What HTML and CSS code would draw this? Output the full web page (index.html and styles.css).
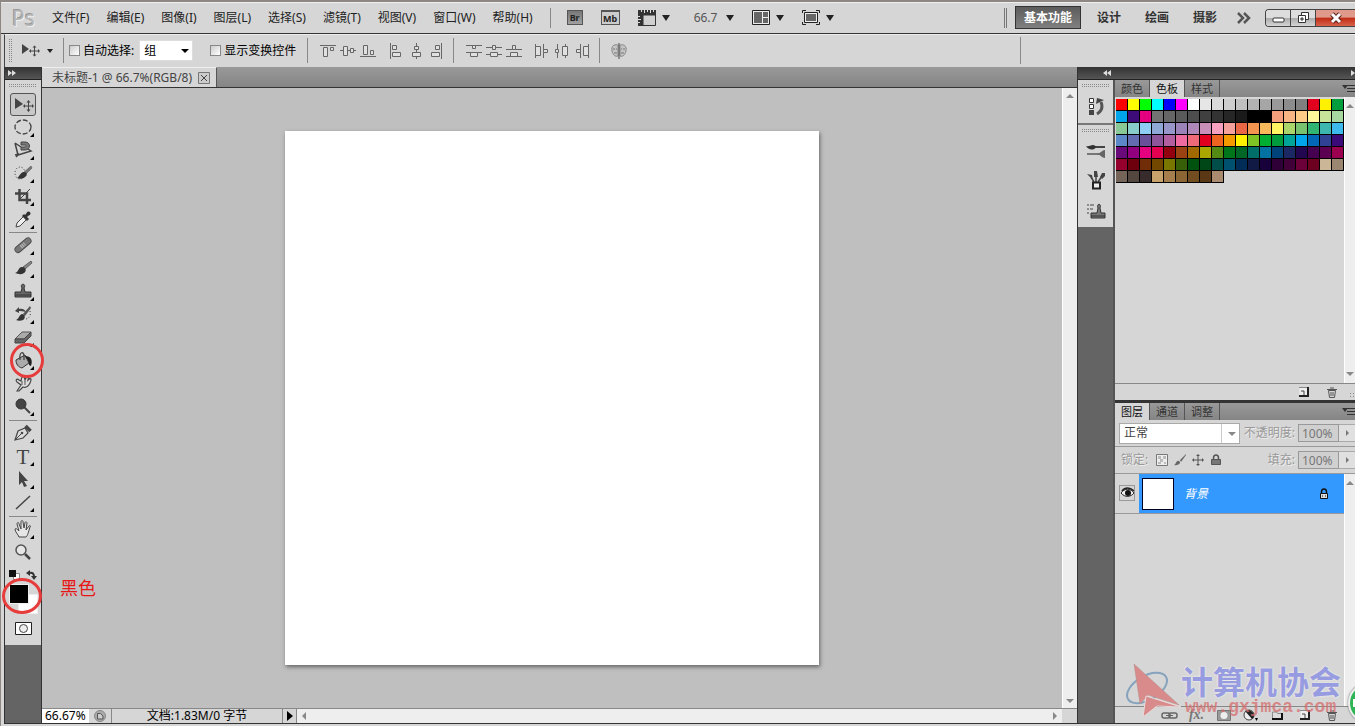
FILE: index.html
```html
<!DOCTYPE html>
<html lang="zh-CN">
<head>
<meta charset="UTF-8">
<meta name="viewport" content="width=device-width, initial-scale=1.0">
<title>未标题-1 @ 66.7%(RGB/8)</title>
<link rel="stylesheet" href="styles.css">
</head>
<body>
<div class="app">
  <!-- Menu bar -->
  <header class="menubar">
    <div class="logo">Ps</div>
    <nav class="menus">
      <button>文件(F)</button>
      <button>编辑(E)</button>
      <button>图像(I)</button>
      <button>图层(L)</button>
      <button>选择(S)</button>
      <button>滤镜(T)</button>
      <button>视图(V)</button>
      <button>窗口(W)</button>
      <button>帮助(H)</button>
    </nav>
    <span class="sep menu-sep"></span>
    <div class="quick">
      <button class="br" aria-label="Bridge">Br</button>
      <button class="mb" aria-label="Mini Bridge">Mb</button>
      <button class="drop" aria-label="查看额外内容">
        <svg width="18" height="16"><path d="M0 0h18v5H5v11H0z" fill="#333"/><path d="M5 5h12.500v10.500H5z" fill="#d0d0d0" stroke="#333"/><path d="M3.500 0v2M6.500 0v3M9.500 0v2M12.500 0v3M15.500 0v2M0 6.500h2M0 9.500h3M0 12.500h2" stroke="#ddd"/></svg>
        <i class="tri"></i>
      </button>
      <button class="drop zoom">66.7 <i class="tri"></i></button>
      <button class="drop" aria-label="排列文档">
        <svg width="18" height="15"><path d="M.5.5h17v14H.5z" fill="#eee" stroke="#222"/><path d="M2 2h8v11H2zM11 2h5v5h-5zM11 8h5v5h-5z" fill="#666"/></svg>
        <i class="tri"></i>
      </button>
      <button class="drop" aria-label="屏幕模式">
        <svg width="18" height="15"><path d="M.5 3V.5H4M14 .5h3.500V3M17.500 12v2.500H14M4 14.500H.5V12" fill="none" stroke="#222"/><path d="M2.500 2.500h13v10h-13z" fill="#eee" stroke="#222"/><path d="M4 4h10v7H4z" fill="#666"/></svg>
        <i class="tri"></i>
      </button>
    </div>
    <div class="spaces">
      <span class="double"></span>
      <button class="current">基本功能</button>
      <button>设计</button>
      <button>绘画</button>
      <button>摄影</button>
      <button aria-label="更多"><svg width="14" height="12"><path d="M1 1l5 5-5 5M7 1l5 5-5 5" fill="none" stroke="#555" stroke-width="2.500"/></svg></button>
    </div>
    <div class="winbtns">
      <button aria-label="最小化"><svg width="13" height="13"><rect x="1" y="7" width="11" height="4" rx="1" fill="#fff" stroke="#333"/></svg></button>
      <button aria-label="还原"><svg width="13" height="13"><path d="M4.500 1.500h7v7h-7z" fill="#fff" stroke="#333"/><path d="M1.500 4.500h7v7h-7z" fill="#fff" stroke="#333"/><path d="M4 7h2v2H4z" fill="#ccc" stroke="#333"/></svg></button>
      <button class="close" aria-label="关闭"><svg width="14" height="12"><path d="M3 2l8 8M11 2l-8 8" stroke="#5a2020" stroke-width="5"/><path d="M3 2l8 8M11 2l-8 8" stroke="#fff" stroke-width="3"/></svg></button>
    </div>
  </header>

  <!-- Options for the move tool -->
  <div class="options">
    <span class="vgrip"></span>
    <button class="drop move" aria-label="移动工具">
      <svg width="18" height="16"><path d="M0 1v10l7-5z" fill="#444"/><path d="M12.500 3.500v9M8 8h9" stroke="#444"/><path d="M12.500 2.500l2 2h-4zM12.500 13.500l2-2h-4zM7 8l2-2v4zM18 8l-2-2v4z" fill="#444"/></svg>
      <i class="tri small"></i>
    </button>
    <span class="sep"></span>
    <label class="check auto"><input type="checkbox"> 自动选择:</label>
    <span class="group-select"><select aria-label="自动选择对象"><option>组</option><option>图层</option></select></span>
    <label class="check"><input type="checkbox"> 显示变换控件</label>
    <span class="sep sep-wide"></span>
    <div class="aligns">
      <button aria-label="顶对齐"><svg width="16" height="16"><path d="M0 2.500h16"/><path d="M3.500 4.500h4v9h-4zM10.500 4.500h3v3h-3z"/></svg></button>
      <button aria-label="垂直居中对齐"><svg width="16" height="16"><path d="M0 7.500h16"/><path d="M3.500 3.500h4v9h-4zM10.500 5.500h3v4h-3z"/></svg></button>
      <button aria-label="底对齐"><svg width="16" height="16"><path d="M0 13.500h16"/><path d="M3.500 2.500h4v9h-4zM10.500 7.500h3v4h-3z"/></svg></button>
    </div>
    <div class="aligns">
      <button aria-label="左对齐"><svg width="16" height="16"><path d="M2.500 0v16"/><path d="M4.500 2.500h4v4h-4zM4.500 9.500h8v4h-8z"/></svg></button>
      <button aria-label="水平居中对齐"><svg width="16" height="16"><path d="M8.500 0v16"/><path d="M6.500 3.500h4v3h-4zM4.500 9.500h8v4h-8z"/></svg></button>
      <button aria-label="右对齐"><svg width="16" height="16"><path d="M13.500 0v16"/><path d="M7.500 2.500h4v4h-4zM3.500 9.500h8v4h-8z"/></svg></button>
    </div>
    <span class="sep"></span>
    <div class="aligns">
      <button aria-label="按顶分布"><svg width="16" height="16"><path d="M0 2.500h16M0 9.500h16"/><path d="M6.500 2.500h3v3h-3zM4.500 9.500h7v4h-7z"/></svg></button>
      <button aria-label="垂直居中分布"><svg width="16" height="16"><path d="M0 4.500h16M0 11.500h16"/><path d="M6.500 2.500h3v4h-3zM4.500 9.500h7v4h-7z"/></svg></button>
      <button aria-label="按底分布"><svg width="16" height="16"><path d="M0 6.500h16M0 13.500h16"/><path d="M6.500 2.500h3v4h-3zM4.500 9.500h7v4h-7z"/></svg></button>
    </div>
    <div class="aligns">
      <button aria-label="按左分布"><svg width="16" height="16"><path d="M1.500 1v14M9.500 1v14"/><path d="M1.500 3.500h5v9h-5zM9.500 6.500h4v3h-4z"/></svg></button>
      <button aria-label="水平居中分布"><svg width="16" height="16"><path d="M3.500 1v14M11.500 1v14"/><path d="M1.500 6.500h3v3h-3zM8.500 3.500h5v9h-5z"/></svg></button>
      <button aria-label="按右分布"><svg width="16" height="16"><path d="M6.500 1v14M14.500 1v14"/><path d="M2.500 6.500h4v3h-4zM9.500 3.500h5v9h-5z"/></svg></button>
    </div>
    <span class="sep"></span>
    <button aria-label="自动对齐图层"><svg width="16" height="16"><path d="M7 2C3 1 0 3 1 8c1 4 3 6 6 5zM9 2c4-1 7 1 6 6-1 4-3 6-6 5z" fill="#c4c4c4" stroke="#888"/><path d="M8 0v16" stroke="#444"/><path d="M2 6h2M5 6h1M10 6h1M12 6h2M3 10h3M10 10h3" stroke="#777"/></svg></button>
    <span class="sep last-sep"></span>
  </div>

  <main class="workspace">
    <!-- Toolbox -->
    <aside class="toolbox">
      <div class="dock-head"><svg width="8" height="6"><path d="M0 0l4 3-4 3zM4 0l4 3-4 3z" fill="#ddd"/></svg></div>
      <div class="tools">
        <span class="hgrip"></span>
        <div class="tool-group">
          <button class="tool active" aria-label="移动"><svg viewBox="0 0 26 23"><path d="M5 5v11l8-5z" fill="#444"/><path d="M18.500 9v8M14 13h9" stroke="#444"/><path d="M18.500 7l2 2.500h-4zM18.500 19l2-2.500h-4zM13 13l2-2v4zM24 13l-2-2v4z" fill="#444"/></svg></button>
          <button class="tool more" aria-label="椭圆选框"><svg viewBox="0 0 26 23"><ellipse cx="13" cy="11" rx="8" ry="7" fill="none" stroke="#444" stroke-dasharray="5 2" stroke-width="1.300"/></svg></button>
          <button class="tool more" aria-label="套索"><svg viewBox="0 0 26 23"><path d="M5 4l6 4M5 4l3 12 13-4-3-2M5 16l4-1M8 16l-2 2" fill="none" stroke="#444" stroke-width="1.500"/><path d="M11 3h4c6 0 6 8 0 8h-4V8h3c3 0 3-2 0-2h-3z" fill="#777" stroke="#444"/></svg></button>
          <button class="tool more" aria-label="快速选择"><svg viewBox="0 0 26 23"><ellipse cx="10" cy="11" rx="5" ry="6" fill="none" stroke="#333" stroke-dasharray="1 2"/><path d="M21 4l1 2-7 7-2-2z" fill="#777" stroke="#444" stroke-width=".5"/><path d="M7 16c2 0 3-6 7-6 3 0 4 3 1 5-2 2-5 2-8 1z" fill="#333"/></svg></button>
          <button class="tool more" aria-label="裁剪"><svg viewBox="0 0 26 23"><path d="M9.500 4v11H21M5 8.500h12V19" fill="none" stroke="#444" stroke-width="2.500"/><path d="M20 4L9 15" stroke="#444"/></svg></button>
          <button class="tool more" aria-label="吸管"><svg viewBox="0 0 26 23"><path d="M14 8l3 3-7 7-4 1 1-4z" fill="#eee" stroke="#444"/><path d="M13 7l5 5M15 9l4-4" stroke="#333" stroke-width="3"/><circle cx="18.500" cy="5.500" r="2" fill="#333"/></svg></button>
        </div>
        <div class="tool-group">
          <button class="tool more" aria-label="修复画笔"><svg viewBox="0 0 26 23"><path d="M8 15.500L18 7" stroke="#444" stroke-width="7" stroke-linecap="round"/><path d="M8 15.500L18 7" stroke="#777" stroke-width="5.500" stroke-linecap="round"/><path d="M11 13l4-3.500" stroke="#bbb" stroke-width="4" stroke-dasharray="1 1"/></svg></button>
          <button class="tool more" aria-label="画笔"><svg viewBox="0 0 26 23"><path d="M21 4l1 2-7 6-2-2z" fill="#888" stroke="#444" stroke-width=".7"/><path d="M5 16c4-1 3-6 7-6 4 0 5 4 2 6-3 2-6 1-9 0z" fill="#333"/></svg></button>
          <button class="tool more" aria-label="仿制图章"><svg viewBox="0 0 26 23"><path d="M11 12l1-4c-3-5 5-5 2 0l1 4h6v5H5v-5z" fill="#666" stroke="#333"/><path d="M5 15h16" stroke="#333"/></svg></button>
          <button class="tool more" aria-label="历史记录画笔"><svg viewBox="0 0 26 23"><path d="M5 8l4-4v2c4-1 6 1 7 3-3-1-5-1-7-1v2z" fill="#444"/><path d="M20 3l1 2-6 8-2-2z" fill="#555"/><path d="M6 17c3-1 3-5 6-6 3 0 4 4 1 6-2 1-5 1-7 0z" fill="#333"/><path d="M20 8c1 4 0 7-4 8" fill="none" stroke="#444" stroke-dasharray="1 2"/></svg></button>
          <button class="tool more" aria-label="橡皮擦"><svg viewBox="0 0 26 23"><path d="M5 13l7-7h9l-6 7z" fill="#aaa" stroke="#555"/><path d="M5 13h9l7-7v4l-7 7H5z" fill="#666" stroke="#444"/></svg></button>
          <button class="tool more marked" aria-label="油漆桶"><svg viewBox="0 0 26 23"><path d="M6 11l9-5 4 8-7 5c-4-1-6-4-6-8z" fill="#aaa" stroke="#333"/><path d="M10 11c-1-9 4-9 4-4v4" fill="none" stroke="#444" stroke-width="1.300"/><path d="M15 7c6 0 8 4 6 10l-2-1c0-3-1-5-3-7z" fill="#222"/></svg></button>
          <button class="tool more" aria-label="涂抹"><svg viewBox="0 0 26 23"><path d="M7 19l4-6-4-3c-2-2 0-4 2-2l2 1c1-6 3-6 4-1 2-5 4-4 3 0 3-3 4-1 2 3-2 4-4 5-7 4l-4 4z" fill="#ddd" stroke="#444" stroke-width="1.200"/><path d="M12 9v4M15 9v4" stroke="#555"/></svg></button>
          <button class="tool more" aria-label="减淡"><svg viewBox="0 0 26 23"><path d="M14 12l6 6" stroke="#444" stroke-width="2"/><circle cx="11" cy="9" r="5" fill="#444" stroke="#333"/></svg></button>
        </div>
        <div class="tool-group">
          <button class="tool more" aria-label="钢笔"><svg viewBox="0 0 26 23"><path d="M5 18l3-9 7-3 3 5-5 5z" fill="#ddd" stroke="#444" stroke-width="1.200"/><path d="M6 17l5-5" stroke="#444"/><circle cx="12" cy="11" r="1.300" fill="#444"/><path d="M15.500 4l5 5" stroke="#444" stroke-width="3.500"/></svg></button>
          <button class="tool more type" aria-label="文字">T</button>
          <button class="tool more" aria-label="路径选择"><svg viewBox="0 0 26 23"><path d="M9 3v14l3-3 2 5 3-1-3-5h4z" fill="#444"/></svg></button>
          <button class="tool more" aria-label="直线"><svg viewBox="0 0 26 23"><path d="M6 18L20 5" stroke="#444" stroke-width="1.500"/></svg></button>
        </div>
        <div class="tool-group">
          <button class="tool more" aria-label="抓手"><svg viewBox="0 0 26 23"><path d="M9 19c-1-3-4-5-4-8 1-1 2 0 4 2L7 6c0-2 2-2 2 0l2 5V4c0-2 2-2 2 0l1 6 1-5c0-2 2-1 2 0l-1 7 3-4c1-1 2 0 1 1-2 6-2 8-4 10z" fill="#e6e6e6" stroke="#444"/></svg></button>
          <button class="tool" aria-label="缩放"><svg viewBox="0 0 26 23"><circle cx="11" cy="9" r="5" fill="#e6e6e6" stroke="#555" stroke-width="1.500"/><path d="M15 13l5 5" stroke="#444" stroke-width="2.500"/></svg></button>
        </div>
        <div class="color-minis">
          <button aria-label="默认颜色"><svg width="11" height="10"><path d="M4.500 3.500h6v6h-6z" fill="#fff" stroke="#888"/><path d="M0 0h7v7H0z" fill="#111"/></svg></button>
          <button aria-label="切换颜色"><svg width="11" height="10"><path d="M3 3c4-1 5 1 5 4" fill="none" stroke="#333" stroke-width="2"/><path d="M0 3l4-3v6zM5 6h6l-3 4z" fill="#333"/></svg></button>
        </div>
        <div class="color-pair marked">
          <button class="fore" aria-label="前景色"></button>
          <button class="back" aria-label="背景色"></button>
        </div>
        <button class="mask" aria-label="快速蒙版"><svg width="17" height="13"><path d="M.5.5h16v12H.5z" fill="#fff" stroke="#222"/><circle cx="8.500" cy="6.500" r="4" fill="#eee" stroke="#444"/></svg></button>
      </div>
    </aside>

    <!-- Open document -->
    <section class="document">
      <div class="doc-tabs">
        <div class="doc-tab">未标题-1 @ 66.7%(RGB/8) <button class="x" aria-label="关闭文档"><svg width="12" height="12"><path d="M.5.5h11v11H.5z" fill="#ccc" stroke="#777"/><path d="M3 3l6 6M9 3L3 9" stroke="#444"/></svg></button></div>
      </div>
      <div class="doc-body">
        <div class="canvas">
          <div class="paper"></div>
          <span class="note">黑色</span>
        </div>
        <div class="vscroll"><i class="up"></i><i class="down"></i></div>
      </div>
      <div class="status">
        <input type="text" value="66.67%" aria-label="缩放比例">
        <span class="status-icon"><svg width="12" height="12"><circle cx="6" cy="6" r="5.500" fill="#aaa" stroke="#888"/><path d="M3.500 9V3.500h3L9 6v3z" fill="#ccc" stroke="#555"/></svg></span>
        <span class="doc-size">文档:1.83M/0 字节</span>
        <button class="status-more" aria-label="状态栏菜单"><svg width="6" height="10"><path d="M0 0l6 5-6 5z"/></svg></button>
        <div class="hscroll"><i class="left"></i><i class="right"></i></div>
      </div>
    </section>

    <!-- Panels on the right -->
    <aside class="dock">
      <div class="dock-head dock-split">
        <svg width="8" height="6"><path d="M4 0L0 3l4 3zM8 0L4 3l4 3z" fill="#ddd"/></svg>
        <svg width="4" height="6"><path d="M0 0l4 3-4 3z" fill="#ddd"/></svg>
      </div>
      <div class="dock-body">
        <div class="icon-strip">
          <div class="strip-group">
            <span class="hgrip"></span>
            <button aria-label="历史记录"><svg width="18" height="20"><path d="M2.500 2.500h4v4h-4zM2.500 8.500h4v4h-4z" fill="#fff" stroke="#333"/><path d="M2 14h5v5H2z" fill="#444"/><path d="M10 18c5-3 6-7 4-12" fill="none" stroke="#555" stroke-width="3"/><path d="M9 8l1-6 7 2z" fill="#444"/></svg></button>
          </div>
          <div class="strip-group">
            <span class="hgrip"></span>
            <button aria-label="画笔预设"><svg width="20" height="16"><path d="M9 4h10" stroke="#444" stroke-width="2"/><path d="M0 3c3 1 4-1 7-1 2 0 3 2 3 2-2 4-8 3-10-1z" fill="#333"/><path d="M1 11h12" stroke="#777" stroke-width="2"/><path d="M11 11c4-1 5-4 8-4v8c-3 0-4-3-8-4z" fill="#666"/></svg></button>
            <button aria-label="画笔"><svg width="20" height="20"><path d="M8 11L5 6M10 11V5M12 11l4-6" stroke="#444" stroke-width="1.500"/><path d="M1 3l5 1 1 5zM8 0h3l1 6H8zM14 6l2-4h3v3l-3 3z" fill="#444"/><path d="M7 11.500h7v6H7z" fill="#eee" stroke="#222" stroke-width="2"/></svg></button>
            <button aria-label="仿制源"><svg width="20" height="18"><path d="M1 3h2M1 7h2M1 11h2M4 3h4M4 7h3" stroke="#444"/><path d="M11 11l1-5c-2-5 4-5 2 0l1 5h4v5H5v-5z" fill="#777" stroke="#333"/><path d="M5 14h14" stroke="#333"/></svg></button>
          </div>
        </div>
        <div class="panels">
          <section class="panel swatch-panel">
            <div class="tabs">
              <button>颜色</button><button class="current">色板</button><button>样式</button>
              <span class="panel-menu"></span>
            </div>
            <div class="scroll-area">
              <div class="scroll-content"><div class="swatches" id="swatches"></div></div>
              <div class="panel-scroll"><i class="up"></i><i class="down"></i></div>
            </div>
            <div class="panel-foot">
              <button aria-label="新建色板"><svg width="10" height="10"><path d="M.5.5h9v9h-9z" fill="#eee"/><path d="M0 .5h9" stroke="#888"/><path d="M9 0v9H0" fill="none" stroke="#222" stroke-width="2"/><path d="M2 4h3v4" fill="none" stroke="#444"/></svg></button>
              <button aria-label="删除色板"><svg width="10" height="11"><path d="M1.500 3.500h7l-1 7h-5zM0 2.500h10M3 1h4M4 5v4M6 5v4" fill="none" stroke="#555"/></svg></button>
              <span class="resize"></span>
            </div>
          </section>
          <section class="panel layer-panel">
            <div class="tabs">
              <button class="current">图层</button><button>通道</button><button>调整</button>
              <span class="panel-menu"></span>
            </div>
            <div class="layer-row">
              <span class="blend"><select aria-label="混合模式"><option>正常</option><option>溶解</option></select></span>
              <label class="amount">不透明度:<input type="text" value="100%"></label><button class="step" aria-label="不透明度滑块"></button>
            </div>
            <div class="layer-row">
              <span class="lock-label">锁定:</span>
              <button class="lock" aria-label="锁定透明像素"><svg width="12" height="12"><path d="M.5.5h11v11H.5z" fill="#eee" stroke="#777"/><path d="M2 2h3v3H2zM7 2h3v3H7zM4 5h3v3H4zM2 8h3v2H2zM8 8h2v2H8z" fill="#bbb"/></svg></button>
              <button class="lock" aria-label="锁定图像像素"><svg width="12" height="12"><path d="M12 0L6 6l1 2 5-7zM0 11c2 0 2-5 5-4 3 2-1 5-5 4z" fill="#666"/></svg></button>
              <button class="lock" aria-label="锁定位置"><svg width="12" height="12"><path d="M6 1v10M1 6h10" stroke="#555"/><path d="M6 0l2 2H4zM6 12l2-2H4zM0 6l2-2v4zM12 6l-2-2v4z" fill="#555"/></svg></button>
              <button class="lock" aria-label="锁定全部"><svg width="12" height="12"><path d="M3.500 6V4c0-4 5-4 5 0v2" fill="none" stroke="#555" stroke-width="1.500"/><path d="M1.500 5.500h9v5h-9z" fill="#777" stroke="#555"/></svg></button>
              <label class="amount">填充:<input type="text" value="100%"></label><button class="step" aria-label="填充滑块"></button>
            </div>
            <div class="scroll-area">
              <div class="scroll-content">
                <div class="layer">
                  <button class="eye" aria-label="图层可见性"><svg width="13" height="12"><path d="M0 6c3-5 10-5 13 0-3 4-9 5-13 0z" fill="#eee" stroke="#222"/><circle cx="7" cy="6" r="3" fill="#111"/><path d="M1 4c3-4 8-4 12 0" fill="none" stroke="#222" stroke-width="1.500"/></svg></button>
                  <div class="layer-main">
                    <span class="thumb"></span>
                    <span class="layer-name">背景</span>
                    <svg width="10" height="11"><path d="M2.500 5V4c0-4 5-4 5 0v1" fill="none" stroke="#111" stroke-width="1.500"/><path d="M1.500 5.500h7v5h-7z" fill="#ddd" stroke="#111"/><path d="M3 8h1M6 8h1" stroke="#111"/></svg>
                  </div>
                </div>
              </div>
              <div class="panel-scroll"><i class="up"></i></div>
            </div>
            <div class="panel-foot layer-foot">
              <button aria-label="链接图层"><svg width="17" height="9"><rect x="1" y="2" width="8" height="5" rx="2" fill="none" stroke="#666" stroke-width="1.500"/><rect x="8" y="2" width="8" height="5" rx="2" fill="none" stroke="#666" stroke-width="1.500"/><path d="M5 4.500h7" stroke="#666"/></svg></button>
              <button class="fx" aria-label="图层样式">fx.</button>
              <button aria-label="图层蒙版"><svg width="14" height="11"><path d="M.5.5h13v10H.5z" fill="#999" stroke="#777"/><circle cx="7" cy="5.500" r="3.500" fill="#eee"/></svg></button>
              <button aria-label="调整图层"><svg width="15" height="12"><circle cx="6" cy="6" r="5" fill="#eee" stroke="#444"/><path d="M2 2c7-3 12 5 7 8z" fill="#222"/><path d="M12 9h3l-1.500 3z"/></svg></button>
              <button aria-label="新建组"><svg width="11" height="9"><path d="M.5 2.500V1h4l1 1.500h5v6H.5z" fill="#ddd" stroke="#888"/><path d="M0 8h10V2" fill="none" stroke="#111" stroke-width="2"/></svg></button>
              <button aria-label="新建图层"><svg width="10" height="10"><path d="M.5.5h9v9h-9z" fill="#eee"/><path d="M0 .5h9" stroke="#888"/><path d="M9 0v9H0" fill="none" stroke="#222" stroke-width="2"/><path d="M2 4h3v4" fill="none" stroke="#444"/></svg></button>
              <button aria-label="删除图层"><svg width="10" height="11"><path d="M1.500 3.500h7l-1 7h-5zM0 2.500h10M3 1h4M4 5v4M6 5v4" fill="none" stroke="#555"/></svg></button>
            </div>
          </section>
        </div>
      </div>
    </aside>
  </main>

  <!-- Site watermark -->
  <div class="watermark">
    <svg width="56" height="56"><ellipse cx="22" cy="25" rx="22" ry="12" transform="rotate(-30 22 25)" fill="none" stroke="#86a3bd" stroke-width="2"/><path d="M9 1l45 41-31-10-8 9z" fill="#d98a8a" stroke="#b09090" stroke-width=".5"/><path d="M21 33l35 11-24-1-14 11z" fill="#d98a8a" stroke="#e8dada"/></svg>
    <div class="mark-text">
      <span class="club">计算机协会</span>
      <span class="site">www.gxjmca.com</span>
    </div>
  </div>
  <div class="ball"></div>
</div>
<script src="script.js"></script>
</body>
</html>
```
FILE: styles.css
```css
*, *::before, *::after { box-sizing: border-box; }
body { margin: 0; font-family: "Noto Sans", "Noto Sans CJK SC", sans-serif; font-size: 12px; line-height: 16px; color: #222; background: #d6d6d6; }
button { border: 0; padding: 0; margin: 0; background: none; font: inherit; color: inherit; }
input, select { font: inherit; color: inherit; margin: 0; }
svg { display: block; }

.app { position: relative; display: flex; flex-direction: column; height: 100vh; padding: 0 0 2px 3px; overflow: hidden; border-top: 2px solid #8d8883; border-left: 1px solid #8d8883; background: #d6d6d6; }

/* menu bar */
.menubar { flex: none; display: flex; align-items: center; height: 32px; margin-left: -3px; padding: 0 0 1px 11px; border-top: 1px solid #eee; border-bottom: 1px solid #333; white-space: nowrap; }
.logo { width: 40px; font-family: "Open Sans", sans-serif; font-size: 21px; color: #b4b4b4; text-shadow: 1px 1px 0 #f0f0f0, -1px -1px 0 #999; }
.menus { display: flex; gap: 17px; }
.sep { flex: none; width: 1px; height: 25px; background: #888; }
.menu-sep { height: 20px; margin: 0 16px 0 17px; }
.quick { display: flex; align-items: center; gap: 18px; }
.br, .mb { width: 16px; height: 15px; border: 1px solid #555; background: linear-gradient(#777, #a0a0a0); font-size: 9px; font-weight: bold; line-height: 13px; }
.mb { width: 19px; background: #ccc; border-top-width: 2px; }
.drop { display: flex; align-items: center; gap: 6px; }
.zoom { gap: 9px; margin: 0 0 0 6px; color: #555; }
.tri { border: 4px solid transparent; border-top: 6px solid #222; border-bottom: 0; }
.tri.small { border-width: 4px 3px 0; }
.spaces { display: flex; align-items: center; gap: 24px; margin-left: auto; padding-right: 14px; font-weight: bold; color: #333; }
.double { width: 3px; height: 20px; margin-right: -16px; border: solid #777; border-width: 0 1px; }
.spaces .current { width: 66px; height: 23px; margin-right: -8px; border: 1px solid #333; background: linear-gradient(#5c5c5c, #808080); color: #fff; }
.spaces button:last-child { margin-left: -4px; }
.winbtns { display: flex; height: 18px; border: 1px solid #444; border-right: 0; border-radius: 4px 0 0 4px; overflow: hidden; }
.winbtns button { display: flex; align-items: center; justify-content: center; width: 25px; border-right: 1px solid #444; background: linear-gradient(#ddd 50%, #aaa 50%, #d5d5d5); }
.winbtns .close { width: 39px; border: 0; background: linear-gradient(#e09a8c 45%, #c02c14 50%, #d8604a); }

/* options bar */
.options { flex: none; display: flex; align-items: center; height: 33px; padding: 0 16px 1px 4px; border-left: 1px solid #444; border-top: 1px solid #eee; color: #000; white-space: nowrap; }
.vgrip { width: 4px; height: 23px; margin-right: 9px; }
.hgrip { display: block; width: 28px; height: 4px; margin: 0 auto; }
.vgrip, .hgrip { background: repeating-linear-gradient(90deg, transparent 0 1px, #d6d6d6 1px 2px), repeating-linear-gradient(#888 0 1px, transparent 1px 2px); }
.move { margin-right: 10px; gap: 7px; }
.check { display: flex; align-items: center; gap: 3px; padding-left: 5px; }
.check input { appearance: none; width: 11px; height: 11px; border: 1px solid #888; background: linear-gradient(135deg, #ccc, #fff); }
.auto { margin-right: 5px; }
.group-select, .blend { position: relative; display: block; }
.group-select { margin-right: 12px; }
.group-select select { display: block; width: 54px; height: 21px; padding: 0 4px; appearance: none; border: 1px solid #ddd; background: #fff; }
.group-select::after { content: ""; position: absolute; right: 4px; top: 9px; border: 4px solid transparent; border-top-color: #000; border-bottom: 0; }
.sep-wide { margin-left: 11px; }
.aligns { display: flex; gap: 4px; padding: 0 0 0 12px; }
.aligns + .sep { margin-left: 9px; }
.aligns path { fill: #e0e0e0; stroke: #666; }
.sep + button { margin-left: 11px; }
.last-sep { margin-left: auto; margin-right: 318px; height: 27px; }

/* workspace */
.workspace { flex: 1; display: flex; min-height: 0; border-bottom: 1px solid #333; border-left: 1px solid #333; }
.dock-head { flex: none; display: flex; align-items: center; height: 13px; padding: 0 3px; background: linear-gradient(#333, #555); border-bottom: 1px solid #222; }

.toolbox { flex: none; width: 37px; border-right: 1px solid #333; background: #646464; }
.tools { padding: 4px 4px 10px; background: #d6d6d6; }
.tool-group { display: flex; flex-direction: column; align-items: center; padding: 1px 0 2px; border-bottom: 1px solid #888; }
.hgrip + .tool-group { padding-top: 5px; padding-bottom: 1px; }
.tool-group:nth-of-type(4) { border: 0; }
.tool { position: relative; width: 26px; height: 23px; }
.tool svg { width: 26px; height: 23px; fill: none; }
.tool.active { border: 1px solid #555; border-radius: 3px; background: #c8c8c8; }
.tool.active svg { margin: -1px; }
.tool.more::before { content: ""; position: absolute; right: 2px; bottom: 2px; border: solid transparent; border-width: 0 0 4px 4px; border-bottom-color: #000; }
.tool.type { font-family: "Liberation Serif", serif; font-size: 21px; line-height: 20px; color: #444; }
.marked::after { content: ""; position: absolute; z-index: 2; border: 3px solid #e63c3c; border-radius: 50%; }
.tool.marked::after { width: 34px; height: 35px; left: 0; top: -6px; }
.color-minis { display: flex; justify-content: space-between; padding: 4px 0 4px; }
.color-pair { position: relative; display: grid; width: 29px; height: 30px; }
.color-pair.marked::after { width: 40px; height: 36px; left: -7px; top: -6px; }
.color-pair button { grid-area: 1 / 1; width: 20px; height: 20px; border: 1px solid #eee; }
.color-pair .fore { z-index: 1; background: #000; }
.color-pair .back { align-self: end; justify-self: end; background: #fff; }
.mask { display: block; margin: 8px auto 0; }

/* document window */
.document { flex: 1; display: flex; flex-direction: column; min-width: 0; }
.doc-tabs { flex: none; display: flex; height: 21px; background: linear-gradient(#999, #858585); border-bottom: 1px solid #333; }
.doc-tab { display: flex; align-items: center; gap: 6px; padding: 0 6px 0 10px; background: #d6d6d6; border-right: 1px solid #555; border-top: 1px solid #eee; color: #444; }
.doc-body { flex: 1; display: flex; min-height: 0; }
.canvas { position: relative; flex: 1; display: flex; align-items: center; justify-content: center; background: #bfbfbf; overflow: hidden; }
.paper { width: 534px; height: 534px; background: #fff; box-shadow: 1px 2px 4px #666; }
.note { position: absolute; left: 18px; top: 488px; font-size: 18px; line-height: 24px; color: #e81818; }
.vscroll { display: flex; flex-direction: column; justify-content: space-between; align-items: center; width: 15px; padding: 6px 0 5px; background: #eee; border-left: 1px solid #fff; }
.up, .down, .left, .right { border: 4px solid transparent; }
.up { border-top: 0; border-bottom-color: #888; }
.down { border-bottom: 0; border-top-color: #888; }
.left { border-left: 0; border-right-color: #888; }
.right { border-right: 0; border-left-color: #888; }
.status { flex: none; display: flex; height: 15px; border-top: 1px solid #888; color: #000; line-height: 14px; }
.status input { width: 47px; padding: 0 3px; border: 0; background: #fff; }
.status-icon { display: flex; align-items: center; justify-content: center; width: 22px; }
.doc-size { width: 171px; border-left: 1px solid #888; text-align: center; }
.status-more { display: flex; align-items: center; justify-content: center; width: 15px; border: solid #888; border-width: 0 1px; }
.hscroll { flex: 1; display: flex; justify-content: space-between; align-items: center; margin-right: 15px; padding: 0 5px; background: #eee; }

/* dock */
.dock { flex: none; display: flex; flex-direction: column; width: 278px; border-left: 1px solid #333; background: #646464; }
.dock-split { justify-content: space-between; padding: 0 0 0 25px; }
.dock-body { flex: 1; display: flex; min-height: 0; }
.icon-strip { width: 35px; }
.strip-group { padding: 4px 0 2px; background: #d6d6d6; border-bottom: 2px solid #777; }
.strip-group:last-child { padding-bottom: 1px; border: 0; }
.strip-group button { display: flex; align-items: center; justify-content: center; width: 35px; height: 30px; }
.strip-group .hgrip { margin-bottom: 3px; }
.panels { flex: 1; display: flex; flex-direction: column; min-width: 0; border-left: 2px solid #555; }
.panel { display: flex; flex-direction: column; background: #d6d6d6; }
.swatch-panel { flex: none; height: 323px; border-bottom: 3px solid #333; }
.layer-panel { flex: 1; min-height: 0; }
.tabs { flex: none; display: flex; height: 17px; background: linear-gradient(#999, #858585); font-size: 11px; line-height: 16px; color: #333; }
.tabs button { width: 35px; border-right: 1px solid #555; }
.tabs .current { background: #d6d6d6; color: #111; }
.panel-menu { width: 8px; height: 7px; margin: 5px 0 0 auto; background: repeating-linear-gradient(#333 0 1px, transparent 1px 3px); }
.panel-menu::before { content: ""; display: block; margin-left: -5px; width: 0; border: 3px solid transparent; border-top: 4px solid #333; border-bottom: 0; }
.scroll-area { flex: 1; display: flex; min-height: 0; }
.scroll-content { flex: 1; }
.panel-scroll { display: flex; flex-direction: column; justify-content: space-between; align-items: center; width: 11px; padding: 7px 0; background: #eee; border-left: 1px solid #fff; }
.swatches { display: grid; grid-template-columns: repeat(19, 12px); grid-auto-rows: 12px; padding: 2px 0 0 1px; }
.swatches button { border: solid #000; border-width: 0 1px 1px 0; }
.panel-foot { flex: none; display: flex; align-items: center; justify-content: flex-end; gap: 18px; height: 17px; border-top: 1px solid #888; }
.resize { width: 6px; height: 6px; margin: 6px 0 0 -6px; background: radial-gradient(#888 1px, transparent 1px) 0 0 / 3px 3px; }
.layer-row { flex: none; display: flex; align-items: center; height: 27px; padding-left: 4px; border-bottom: 1px solid #999; color: #999; white-space: nowrap; }
.blend select { display: block; width: 121px; height: 21px; padding: 0 4px; appearance: none; border: 1px solid #aaa; background: linear-gradient(90deg, #fff 101px, #ccc 101px, #ccc 102px, #fff 102px); color: #444; }
.blend::after { content: ""; position: absolute; right: 4px; top: 9px; border: 4px solid transparent; border-top-color: #888; border-bottom: 0; }
.amount { display: flex; align-items: center; gap: 3px; margin-left: auto; text-shadow: 1px 1px 0 #eee; }
.amount input { width: 41px; height: 18px; padding: 0 3px; border: 1px solid #999; background: #d0d0d0; color: #777; }
.step { display: flex; align-items: center; width: 16px; height: 18px; padding-left: 7px; border: solid #aaa; border-width: 1px 0; background: #e0e0e0; }
.step::before { content: ""; border: 3px solid transparent; border-left: 3px solid #777; border-right: 0; }
.lock-label { margin: 0 8px 0 2px; text-shadow: 1px 1px 0 #eee; }
.lock { margin-right: 6px; }
.layer { display: flex; height: 40px; border-bottom: 1px solid #999; }
.eye { display: flex; align-items: center; justify-content: center; width: 16px; height: 16px; margin: 11px 4px; border: 1px solid #999; }
.layer-main { flex: 1; display: flex; align-items: center; padding: 0 15px 0 3px; background: #3399ff; color: #fff; }
.thumb { width: 32px; height: 32px; margin-right: 10px; border: 1px solid #002; background: #fff; }
.layer-name { flex: 1; font-style: italic; }
.layer-foot { gap: 0; padding-right: 10px; }
.layer-foot button { display: flex; align-items: center; justify-content: center; width: 27px; }
.layer-foot .fx { font-family: "Liberation Serif", serif; font-size: 14px; font-style: italic; font-weight: bold; color: #777; }

/* watermark */
.watermark { position: absolute; right: 14px; bottom: 7px; display: flex; align-items: flex-start; pointer-events: none; }
.mark-text { display: flex; flex-direction: column; }
.club { font-family: "Noto Sans CJK SC", sans-serif; font-size: 32px; font-weight: bold; line-height: 34px; color: #979be0; text-shadow: 0 0 2px #eee, 0 0 2px #eee; }
.site { padding-left: 4px; font-family: "Liberation Mono", monospace; font-size: 18px; font-weight: bold; line-height: 20px; color: rgba(214, 110, 110, 0.75); }
.ball { position: absolute; right: -33px; bottom: 3px; width: 40px; height: 40px; border: 2px solid #eee; border-radius: 50%; background: #2fb455; box-shadow: 0 0 2px #555; }
.ball::before { content: ""; display: block; width: 8px; height: 8px; margin: 14px 0 0 3px; border: solid #fff; border-width: 2px 0 2px 2px; }
```
FILE: script.js
```js
// Default swatches, 19 to a row
const colors = [
  'f00 ff0 0f0 0ff 00f f0f fff e6e6e6 dadada cdcdcd c0c0c0 b3b3b3 a6a6a6 999 8c8c8c 808080 e2001f fff100 009e3d',
  '00a5ea 3d0c78 e4007f 737373 666 5a5a5a 4d4d4d 404040 333 262626 1a1a1a 000 000 f5a07c f7b583 fccb85 fff799 c8e49b a7d7a0',
  '88c997 88cdca 8fcdf5 90a8d6 9896c8 9b82b9 ae88b8 c98fb9 f7a0c0 f5a09a eb6846 f39550 f7b95b fff462 abd46a 78c26f 31b573 3eb6b0 3db9ee',
  '5c87c8 636cb0 6a5099 8e5599 b35e9e ef6a9f ee6a77 e2001f ec6420 f39a00 fff100 7dc424 00af32 009b3c 00a499 00a5ec 0068b6 2f4293 3b0a78',
  '6a0a7a 92007f e5007f e60050 92000f 9b4212 a06a00 aaa800 528a14 00761b 006726 006e68 0071a1 00437a 1b2864 220650 450050 5c0052 9b0050',
  '95002d 6e000d 702d08 724800 7a7700 386009 00520f 004718 004e49 005070 002d57 111a44 18003a 2e0037 420038 6c0038 6d0020 cbb698 9a8671',
  '756558 534740 372c2b c7a26b a67d4d 8c6534 724d20 5a3715 aa8b70'
].join(' ').split(' ');

const grid = document.getElementById('swatches');
colors.forEach(color => {
  const swatch = document.createElement('button');
  swatch.style.backgroundColor = '#' + color;
  swatch.setAttribute('aria-label', '#' + color);
  grid.appendChild(swatch);
});
```
